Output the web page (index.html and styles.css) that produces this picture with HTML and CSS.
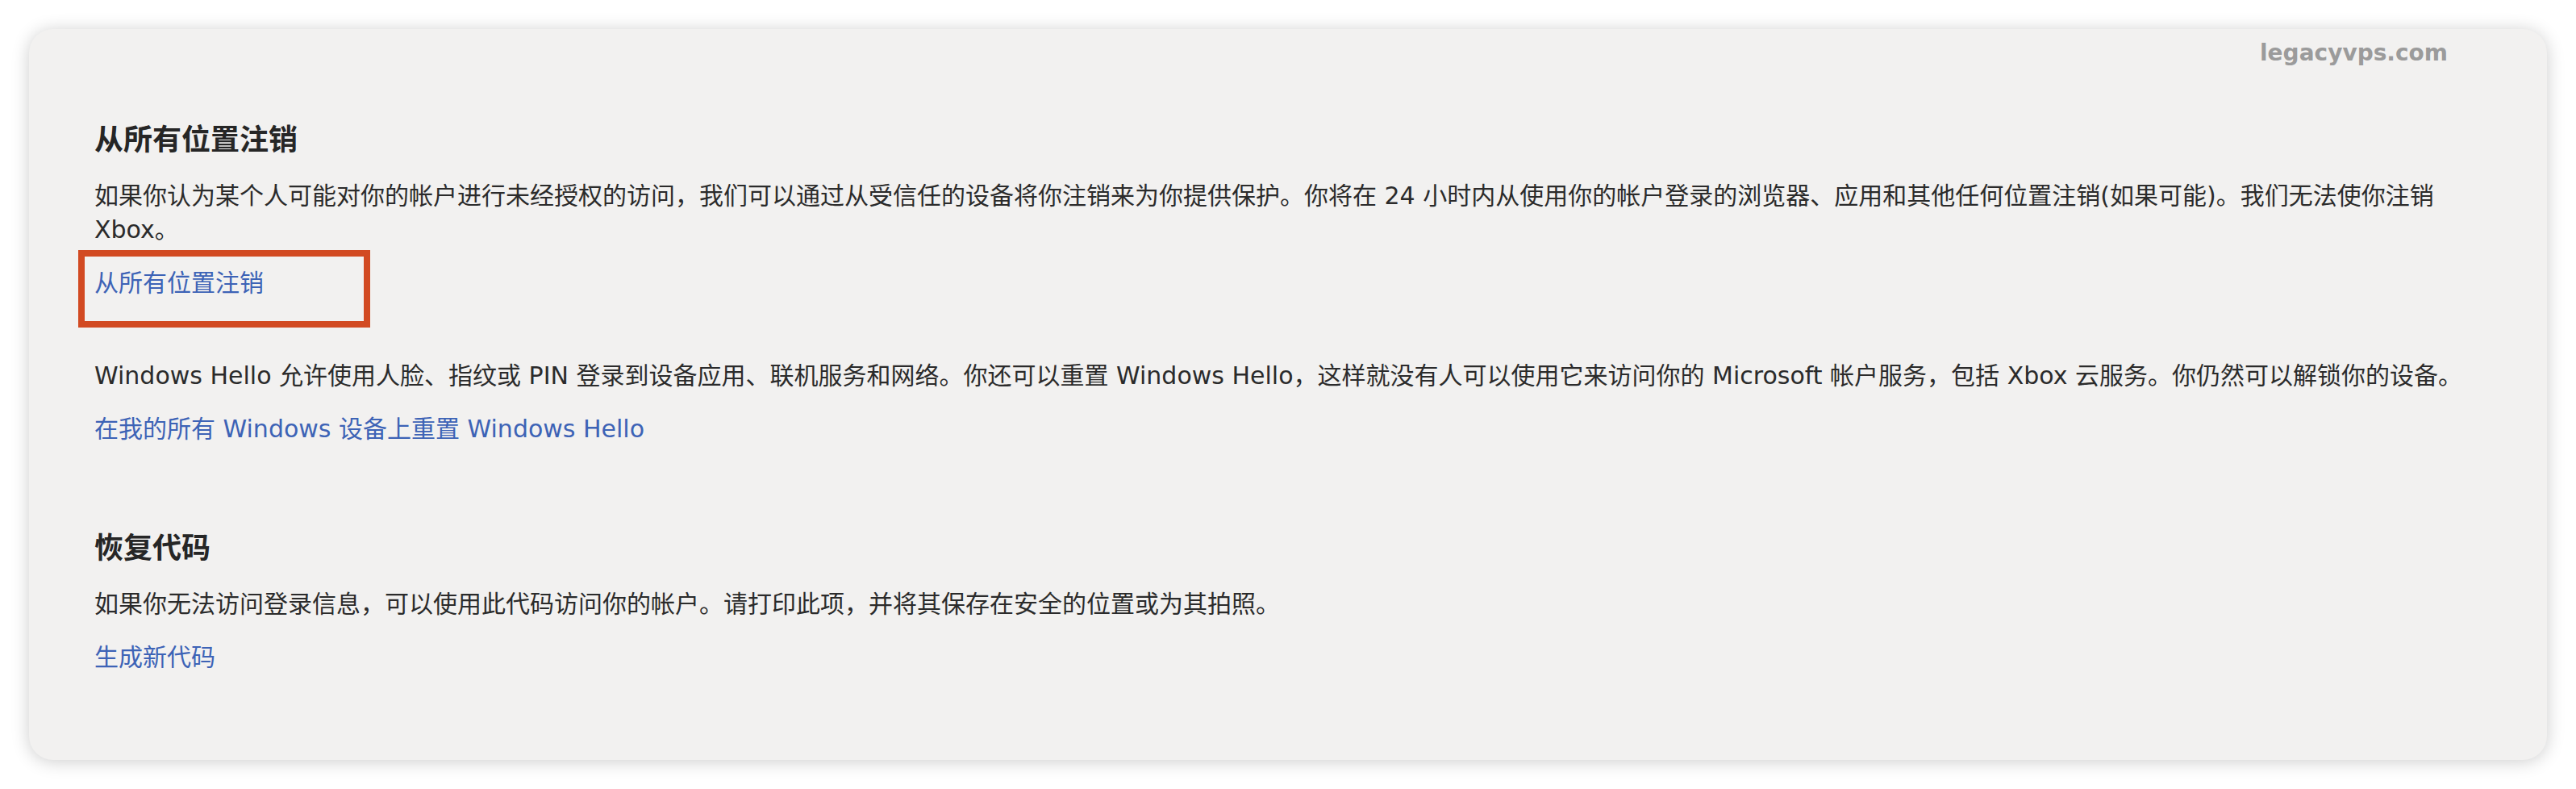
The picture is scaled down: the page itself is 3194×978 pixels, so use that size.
FILE: index.html
```html
<!DOCTYPE html>
<html lang="zh-CN">
<head>
  <meta charset="utf-8">
  <title>安全设置</title>
  <link rel="stylesheet" href="styles.css">
</head>
<body>
<div class="Page">
  <div class="Card">

    <span class="Watermark">legacyvps.com</span>

    <section class="Block">
      <h2 class="Block-title">从所有位置注销</h2>
      <p class="Block-text">如果你认为某个人可能对你的帐户进行未经授权的访问，我们可以通过从受信任的设备将你注销来为你提供保护。你将在 24 小时内从使用你的帐户登录的浏览器、应用和其他任何位置注销(如果可能)。我们无法使你注销 Xbox。</p>
      <div class="Block-action">
        <a class="Link" href="#">从所有位置注销</a>
        <span class="Highlight"></span>
      </div>
    </section>

    <section class="Block Block--plain">
      <p class="Block-text">Windows Hello 允许使用人脸、指纹或 PIN 登录到设备应用、联机服务和网络。你还可以重置 Windows Hello，这样就没有人可以使用它来访问你的 Microsoft 帐户服务，包括 Xbox 云服务。你仍然可以解锁你的设备。</p>
      <div class="Block-action">
        <a class="Link" href="#">在我的所有 Windows 设备上重置 Windows Hello</a>
      </div>
    </section>

    <section class="Block Block--last">
      <h2 class="Block-title">恢复代码</h2>
      <p class="Block-text">如果你无法访问登录信息，可以使用此代码访问你的帐户。请打印此项，并将其保存在安全的位置或为其拍照。</p>
      <div class="Block-action">
        <a class="Link" href="#">生成新代码</a>
      </div>
    </section>

  </div>
</div>
</body>
</html>
```

FILE: styles.css
```css
html, body {
  margin: 0;
  background-color: #fff;
}
.Page {
  padding: 36px;
}
.Card {
  position: relative;
  box-sizing: border-box;
  min-height: 906px;
  padding: 113px 81px 105px;
  border-radius: 30px;
  background-color: #f2f1f0;
  box-shadow: 0 2px 22px rgba(0, 0, 0, 0.2);
  color: #2b2b2b;
  font-family: "DejaVu Sans", "Noto Sans CJK SC", sans-serif;
  font-size: 30px;
  line-height: 42px;
}
.Watermark {
  position: absolute;
  top: 16px;
  right: 123px;
  color: #9b9b9b;
  font-family: "DejaVu Sans", sans-serif;
  font-size: 28px;
  font-weight: 700;
  line-height: 28px;
}
.Block {
  margin-bottom: 73px;
}
.Block--plain {
  margin-bottom: 102px;
}
.Block--last {
  margin-bottom: 0;
}
.Block-title {
  margin: 0 0 23px;
  font-size: 36px;
  font-weight: 700;
  line-height: 50px;
  color: #262626;
}
.Block-text {
  margin: 0 0 24px;
}
.Block-action {
  position: relative;
}
.Link {
  color: #3d63b6;
  text-decoration: none;
}
.Link:hover {
  text-decoration: underline;
}
/* 注目させるための赤枠 */
.Highlight {
  position: absolute;
  top: -20px;
  left: -20px;
  box-sizing: border-box;
  width: 362px;
  height: 96px;
  border: 8px solid #d24a22;
  pointer-events: none;
}
```
